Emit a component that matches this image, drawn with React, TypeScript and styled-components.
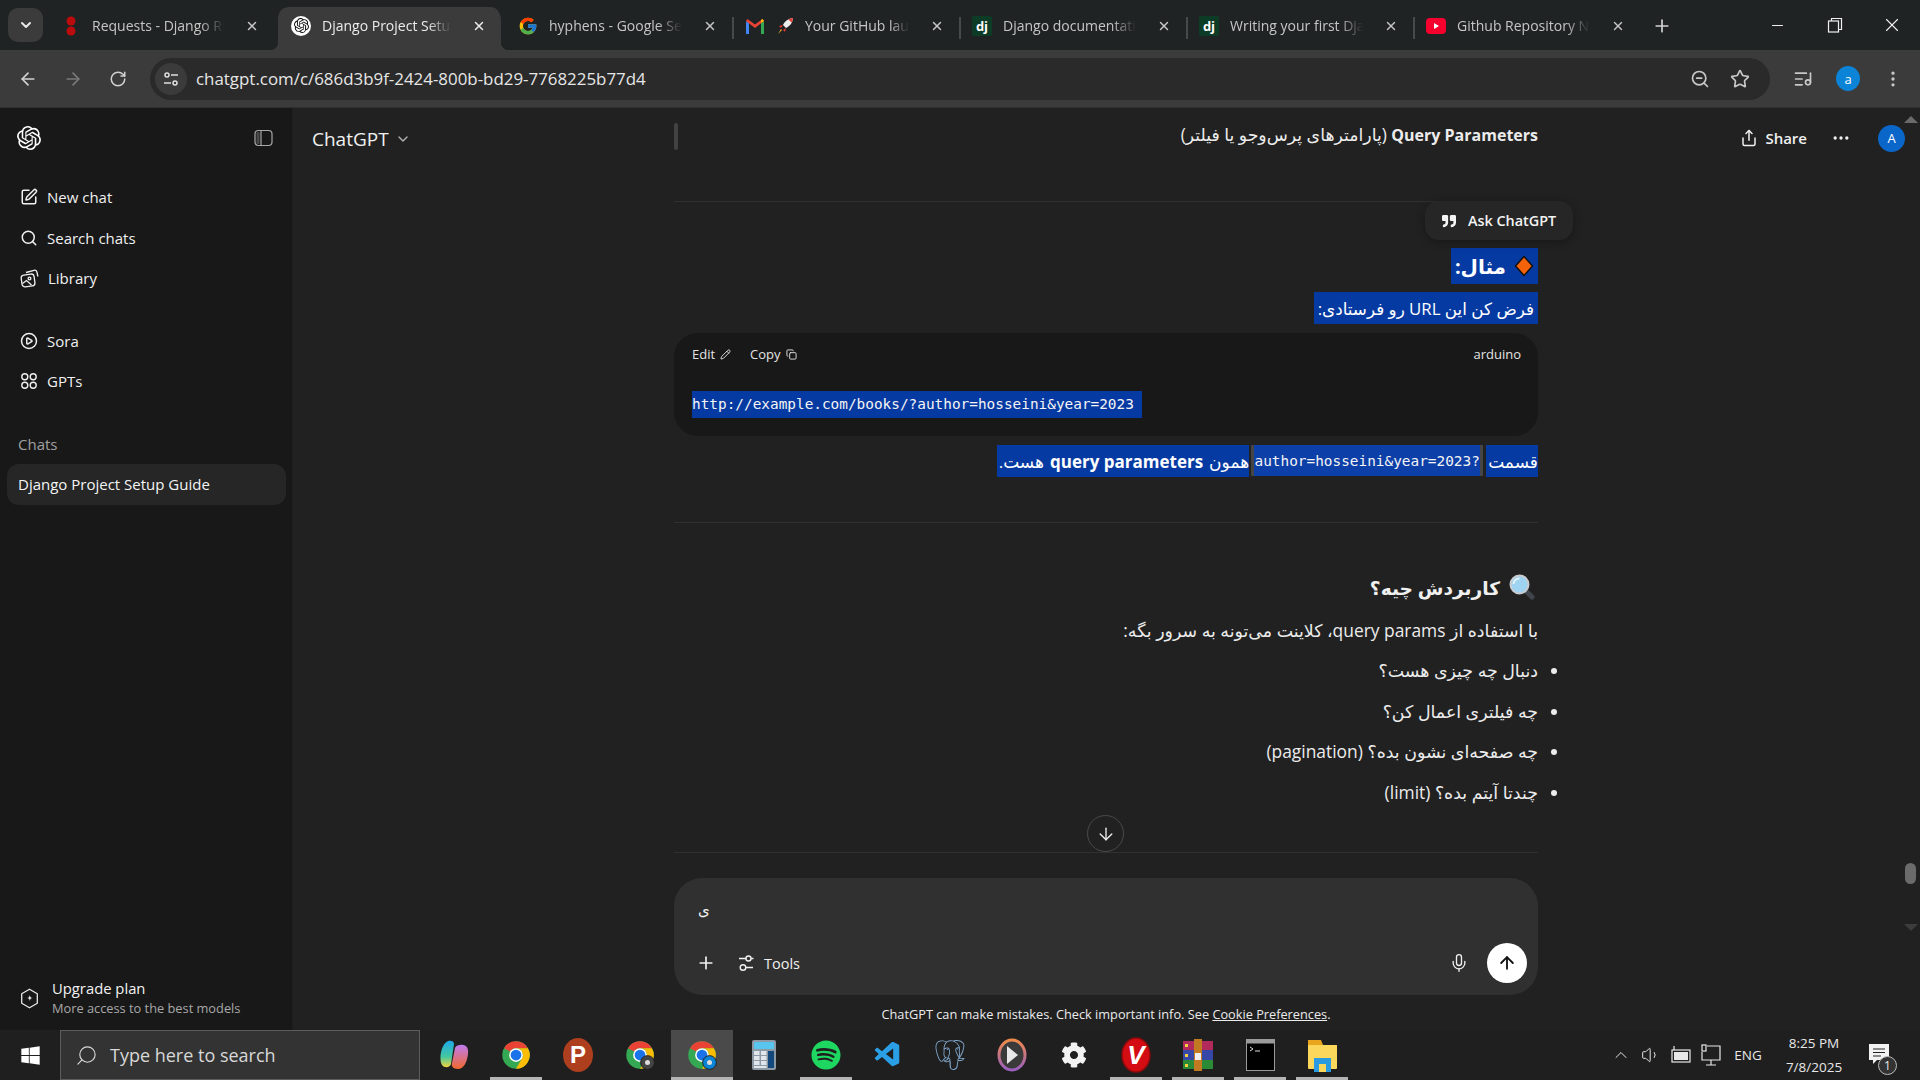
import { ReactElement, ReactNode } from 'react';
import styled, { createGlobalStyle } from 'styled-components';
import {
  ArrowDown,
  ArrowLeft,
  ArrowRight,
  ArrowUp,
  ChevronDown,
  ChevronUp,
  CirclePlay,
  Copy,
  Ellipsis,
  EllipsisVertical,
  ListMusic,
  Mic,
  Minus,
  Pencil,
  Plus,
  RotateCw,
  Search,
  Share,
  SquarePen,
  Star,
  Volume1,
  X,
  ZoomOut,
} from 'lucide-react';
import { FaCog, FaQuoteRight, FaSpotify, FaWindows } from 'react-icons/fa';
import { FcGoogle } from 'react-icons/fc';
import { SiOpenai, SiPostgresql } from 'react-icons/si';
import { VscVscode } from 'react-icons/vsc';

const UI_FONT = '"Open Sans", "DejaVu Sans", sans-serif';
const MONO_FONT = '"DejaVu Sans Mono", "Liberation Mono", monospace';
const SELECTION = '#063aa3';

const GlobalStyle = createGlobalStyle`
  html, body {
    margin: 0;
    padding: 0;
    background: #212121;
  }
  * {
    box-sizing: border-box;
  }
`;

const Page = styled.div`
  width: 1920px;
  height: 1080px;
  display: flex;
  flex-direction: column;
  overflow: hidden;
  font-family: ${UI_FONT};
  color: #ececec;
`;

/* browser chrome */

const TabStrip = styled.div`
  height: 50px;
  flex-shrink: 0;
  display: flex;
  align-items: flex-end;
  padding-left: 8px;
  background: #202323;
`;

const TabSearch = styled.div`
  width: 35px;
  height: 34px;
  margin: 0 5px 8px 0;
  border-radius: 10px;
  background: #3b3b3b;
  color: #e8e8e8;
  display: flex;
  align-items: center;
  justify-content: center;
`;

const Tab = styled.div<{ $active?: boolean; $divider?: boolean; $wide?: boolean }>`
  position: relative;
  width: ${(p) => (p.$wide ? 230 : 227)}px;
  height: 43px;
  padding: 0 ${(p) => (p.$wide ? 19 : 15)}px 6px 13px;
  display: flex;
  align-items: center;
  gap: 11px;
  font-size: 14px;
  color: ${(p) => (p.$active ? '#ececec' : '#c4c7c5')};
  ${(p) =>
    p.$divider &&
    `&::before {
      content: '';
      position: absolute;
      left: 0;
      top: 10px;
      height: 22px;
      width: 2px;
      background: #474a4a;
    }`}
  ${(p) =>
    p.$active &&
    `background: #3b3b3b;
    background-clip: padding-box;
    border-right: 4px solid transparent;
    border-radius: 10px 14px 0 0;
    &::before, &::after {
      content: '';
      position: absolute;
      bottom: 0;
      width: 8px;
      height: 8px;
    }
    &::before {
      left: -8px;
      background: radial-gradient(circle at 0 0, transparent 8px, #3b3b3b 8.5px);
    }
    &::after {
      right: -8px;
      background: radial-gradient(circle at 100% 0, transparent 8px, #3b3b3b 8.5px);
    }`}
`;

const TabIcon = styled.span`
  width: 20px;
  height: 20px;
  flex-shrink: 0;
  display: flex;
  align-items: center;
  justify-content: center;
`;

const FaviconDisc = styled(TabIcon)`
  border-radius: 50%;
  background: #fff;
  color: #111;
`;

const DjangoIcon = styled(TabIcon)`
  background: #0c3c26;
  color: #fff;
  border-radius: 2px;
  font-weight: 700;
  font-size: 13px;
`;

const TabTitle = styled.span`
  flex: 1;
  min-width: 0;
  margin-right: 10px;
  white-space: nowrap;
  overflow: hidden;
  -webkit-mask-image: linear-gradient(90deg, #000 82%, transparent);
  mask-image: linear-gradient(90deg, #000 82%, transparent);
`;

const NewTab = styled.div`
  width: 44px;
  height: 43px;
  padding-bottom: 5px;
  display: flex;
  align-items: center;
  justify-content: center;
  color: #d4d4d4;
`;

const WindowControls = styled.div`
  margin-left: auto;
  align-self: stretch;
  display: flex;
  align-items: center;
  color: #f0f0f0;
`;

const WindowButton = styled.div`
  width: 57px;
  display: flex;
  justify-content: center;
`;

const Toolbar = styled.div`
  height: 58px;
  flex-shrink: 0;
  display: flex;
  align-items: center;
  padding-left: 5px;
  background: #3b3b3b;
  border-bottom: 1px solid #2f2f2f;
`;

const NavButton = styled.div<{ $dim?: boolean }>`
  width: 45px;
  display: flex;
  justify-content: center;
  color: ${(p) => (p.$dim ? '#7a7a7a' : '#d2d2d2')};
`;

const AddressBar = styled.div`
  width: 1620px;
  height: 42px;
  margin-left: 10px;
  padding: 0 20px 0 5px;
  border-radius: 21px;
  background: #2a2a2a;
  display: flex;
  align-items: center;
`;

const SiteInfo = styled.div`
  width: 32px;
  height: 32px;
  border-radius: 50%;
  background: #3b3b3b;
  display: flex;
  align-items: center;
  justify-content: center;
`;

const Url = styled.span`
  margin-left: 9px;
  font-size: 16.9px;
  color: #e6e6e6;
`;

const AddressActions = styled.div`
  margin-left: auto;
  display: flex;
  align-items: center;
  gap: 20px;
  color: #c8c8c8;
`;

const ToolbarEnd = styled.div`
  flex: 1;
  padding: 0 17px 0 23px;
  display: flex;
  align-items: center;
  justify-content: space-between;
  color: #c8c8c8;
`;

const ProfileBadge = styled.div`
  width: 24px;
  height: 25px;
  border-radius: 50%;
  background: #0b84d8;
  color: #fff;
  font-size: 13px;
  display: flex;
  align-items: center;
  justify-content: center;
`;

/* app body */

const Body = styled.div`
  flex: 1;
  min-height: 0;
  display: flex;
`;

const Sidebar = styled.aside`
  width: 293px;
  flex-shrink: 0;
  display: flex;
  flex-direction: column;
  background: #181818;
  border-right: 1px solid #1e1e1e;
`;

const SidebarHead = styled.div`
  height: 60px;
  padding: 0 19px 0 17px;
  margin-bottom: 9px;
  display: flex;
  align-items: center;
  justify-content: space-between;
  color: #fff;
`;

const NavList = styled.div<{ $gapTop?: number }>`
  margin-top: ${(p) => p.$gapTop ?? 0}px;
`;

const NavRow = styled.div`
  height: 40.5px;
  padding-left: 20px;
  display: flex;
  align-items: center;
  gap: 9px;
  font-size: 15px;
  color: #f0f0f0;
`;

const SectionLabel = styled.div`
  margin: 30px 0 8px 18px;
  height: 24px;
  line-height: 24px;
  font-size: 15px;
  color: #a0a0a0;
`;

const ChatRow = styled.div`
  width: 279px;
  height: 41px;
  margin-left: 7px;
  padding-left: 11px;
  border-radius: 12px;
  background: #262626;
  display: flex;
  align-items: center;
  font-size: 15px;
  color: #f4f4f4;
`;

const UpgradeRow = styled.div`
  margin-top: auto;
  height: 50px;
  margin-bottom: 7px;
  padding-left: 20px;
  display: flex;
  align-items: center;
  gap: 13px;
`;

const UpgradeText = styled.div`
  display: flex;
  flex-direction: column;
`;

const UpgradeTitle = styled.span`
  font-size: 14.8px;
  line-height: 20px;
  color: #f2f2f2;
`;

const UpgradeSub = styled.span`
  font-size: 12.8px;
  line-height: 20px;
  color: #a8a8a8;
`;

const Main = styled.main`
  position: relative;
  flex: 1;
  min-width: 0;
  display: flex;
  flex-direction: column;
  background: #212121;
`;

const TopBar = styled.header`
  height: 60px;
  flex-shrink: 0;
  display: grid;
  grid-template-columns: 381px 864px 1fr;
  align-items: center;
`;

const ModelPicker = styled.div`
  padding: 2px 0 0 19px;
  display: flex;
  align-items: center;
  gap: 6px;
  font-size: 19px;
  color: #f0f0f0;
`;

const ThreadTitle = styled.div`
  position: relative;
  direction: rtl;
  margin-top: -7px;
  font-size: 17.3px;
  color: #ececec;
  white-space: nowrap;
  text-align: right;
`;

const TitleLatin = styled.span`
  font-size: 16px;
  font-weight: 700;
`;

const StickyMark = styled.span`
  position: absolute;
  left: 0;
  top: 0;
  width: 4px;
  height: 27px;
  border-radius: 2px;
  background: #424242;
`;

const TopActions = styled.div`
  padding-right: 15px;
  display: flex;
  align-items: center;
  justify-content: flex-end;
  color: #f0f0f0;
`;

const ShareButton = styled.div`
  display: flex;
  align-items: center;
  gap: 7px;
  font-size: 15px;
  font-weight: 600;
`;

const MoreButton = styled.div`
  margin: 0 27px 0 24px;
  display: flex;
`;

const Avatar = styled.div`
  width: 27px;
  height: 27px;
  border-radius: 50%;
  background: #0a66c9;
  color: #fff;
  font-size: 13px;
  display: flex;
  align-items: center;
  justify-content: center;
`;

const Thread = styled.section`
  position: relative;
  width: 864px;
  margin-left: 381px;
  flex: 1;
  min-height: 0;
  direction: rtl;
  display: flex;
  flex-direction: column;
  align-items: flex-start;
`;

const Rule = styled.hr<{ $top: number }>`
  width: 100%;
  margin: ${(p) => p.$top}px 0 0;
  border: 0;
  border-top: 1px solid #303030;
`;

const AskPopup = styled.div`
  position: absolute;
  right: -35px;
  top: 33px;
  width: 148px;
  height: 39px;
  padding-left: 17px;
  display: flex;
  direction: ltr;
  align-items: center;
  gap: 12px;
  border-radius: 14px;
  background: #262626;
  box-shadow: 0 2px 10px rgba(0, 0, 0, 0.3);
  font-size: 14.4px;
  font-weight: 600;
  white-space: nowrap;
  color: #f4f4f4;
`;

const Selected = styled.div<{ $top: number; $height: number }>`
  margin-top: ${(p) => p.$top}px;
  height: ${(p) => p.$height}px;
  padding: 0 4px 0 4px;
  background: ${SELECTION};
  color: #fff;
  display: flex;
  align-items: center;
  gap: 8px;
`;

const SelectedHeading = styled(Selected)`
  font-size: 20px;
  font-weight: 700;
`;

const SelectedText = styled(Selected)`
  font-size: 16.8px;
  white-space: nowrap;
`;

const MixedLine = styled.div`
  margin-top: 9px;
  height: 32px;
  display: flex;
  gap: 5px;
  font-size: 17px;
`;

const SelectionPiece = styled.span`
  height: 32px;
  display: flex;
  align-items: center;
  gap: 6px;
  padding: 0 0 0 2px;
  background: ${SELECTION};
  color: #fff;
  white-space: nowrap;
`;

const StrongWord = styled.strong`
  font-weight: 700;
`;

const InlineCode = styled.code`
  position: relative;
  height: 31px;
  width: 226px;
  margin-right: 1px;
  text-align: center;
  line-height: 33px;
  font-family: ${MONO_FONT};
  font-size: 14.4px;
  background: #0c3fa8;
  color: #f4f4f4;
  white-space: nowrap;
  box-shadow: 3px 0 0 #454545, -3px 0 0 #454545;
`;

const CodeBlock = styled.div`
  width: 100%;
  height: 103px;
  margin-top: 9px;
  direction: ltr;
  border-radius: 24px;
  background: #181818;
`;

const CodeHead = styled.div`
  height: 42px;
  padding: 0 17px 0 18px;
  display: flex;
  align-items: center;
  font-size: 13px;
  color: #e4e4e4;
`;

const CodeAction = styled.span`
  margin-right: 19px;
  display: flex;
  align-items: center;
  gap: 5px;
`;

const CodeLang = styled.span`
  margin-left: auto;
`;

const CodeBody = styled.pre`
  width: max-content;
  height: 27px;
  margin: 16px 0 0 18px;
  padding-right: 8px;
  background: ${SELECTION};
  font-family: ${MONO_FONT};
  font-size: 14.4px;
  line-height: 27px;
  color: #f4f4f4;
`;

const Heading = styled.h3`
  height: 36px;
  margin: 46px 0 0;
  padding-right: 3px;
  display: flex;
  align-items: center;
  gap: 9px;
  font-size: 18.6px;
  font-weight: 700;
  color: #f0f0f0;
`;

const Para = styled.p`
  height: 32px;
  margin: 9px 0 0;
  line-height: 32px;
  font-size: 17.4px;
  color: #ececec;
`;

const Bullets = styled.ul`
  margin: 8px 0 0;
  padding: 0;
  display: flex;
  flex-direction: column;
  gap: 8.5px;
  font-size: 17.4px;
  color: #ececec;
`;

const Bullet = styled.li`
  height: 32px;
  line-height: 32px;
  margin-right: 0;
`;

const ScrollDown = styled.div`
  position: absolute;
  left: 413px;
  bottom: 1px;
  width: 37px;
  height: 37px;
  border-radius: 50%;
  border: 1px solid #4a4a4a;
  background: #212121;
  display: flex;
  align-items: center;
  justify-content: center;
  color: #f0f0f0;
`;

const Composer = styled.div`
  width: 864px;
  height: 117px;
  margin: 25px 0 0 381px;
  flex-shrink: 0;
  padding: 20px 11px 12px 22px;
  border-radius: 28px;
  background: #303030;
  display: flex;
  flex-direction: column;
  gap: 15px;
`;

const Draft = styled.div`
  height: 30px;
  padding-left: 2px;
  line-height: 22px;
  font-size: 15px;
  color: #f0f0f0;
`;

const ComposerRow = styled.div`
  height: 40px;
  display: flex;
  align-items: center;
  color: #f0f0f0;
`;

const ToolsButton = styled.div`
  margin-left: 20px;
  display: flex;
  align-items: center;
  gap: 8px;
  font-size: 14.5px;
`;

const MicButton = styled.div`
  margin: 0 18px 0 auto;
  display: flex;
`;

const SendButton = styled.div`
  width: 40px;
  height: 40px;
  border-radius: 50%;
  background: #fff;
  color: #111;
  display: flex;
  align-items: center;
  justify-content: center;
`;

const Footnote = styled.div`
  width: 864px;
  height: 30px;
  margin: 4px 0 1px 381px;
  flex-shrink: 0;
  line-height: 30px;
  text-align: center;
  font-size: 12.75px;
  color: #ececec;
`;

const FootLink = styled.span`
  text-decoration: underline;
`;

const ScrollThumb = styled.div`
  position: absolute;
  right: 4px;
  top: 755px;
  width: 11px;
  height: 21px;
  border-radius: 6px;
  background: #6b6b6b;
`;

const ScrollArrow = styled.div<{ $down?: boolean; $top: number }>`
  position: absolute;
  right: 2px;
  top: ${(p) => p.$top}px;
  width: 0;
  height: 0;
  border-left: 7px solid transparent;
  border-right: 7px solid transparent;
  ${(p) =>
    p.$down
      ? 'border-top: 7px solid #3c3c3c;'
      : 'border-bottom: 7px solid #6a6a6a;'}
`;

/* windows taskbar */

const Taskbar = styled.footer`
  height: 50px;
  flex-shrink: 0;
  display: flex;
  align-items: center;
  background: #1f1f1f;
  color: #e8e8e8;
`;

const StartButton = styled.div`
  width: 60px;
  display: flex;
  justify-content: center;
  color: #fff;
`;

const SearchBox = styled.div`
  width: 360px;
  height: 50px;
  margin-right: 3px;
  padding-left: 14px;
  display: flex;
  align-items: center;
  gap: 12px;
  background: #333;
  border: 1px solid #5c5c5c;
  font-size: 18px;
  color: #d8d8d8;
`;

const TaskIcon = styled.div<{ $running?: boolean; $active?: boolean }>`
  position: relative;
  width: 62px;
  height: 50px;
  display: flex;
  align-items: center;
  justify-content: center;
  background: ${(p) => (p.$active ? '#4a4a4a' : 'transparent')};
  ${(p) =>
    p.$running &&
    `&::after {
      content: '';
      position: absolute;
      bottom: 0;
      left: ${p.$active ? 0 : 5}px;
      right: ${p.$active ? 0 : 5}px;
      height: 3px;
      background: #b4b4b4;
    }`}
`;

const Tray = styled.div`
  margin-left: auto;
  height: 100%;
  padding-right: 21px;
  display: flex;
  align-items: center;
`;

const TrayIcon = styled.div`
  width: 30px;
  display: flex;
  justify-content: center;
`;

const TrayLang = styled.span`
  margin-left: 2px;
  width: 40px;
  font-size: 13.5px;
  text-align: center;
`;

const Clock = styled.div`
  width: 88px;
  margin-left: 2px;
  text-align: center;
  font-size: 13.5px;
  line-height: 24px;
`;

const Notice = styled.div`
  position: relative;
  width: 40px;
  margin-left: 1px;
  display: flex;
  justify-content: center;
`;

const NoticeCount = styled.span`
  position: absolute;
  right: 2px;
  bottom: -9px;
  width: 19px;
  height: 19px;
  border-radius: 50%;
  border: 1px solid #bbb;
  background: #333;
  font-size: 12px;
  line-height: 17px;
  text-align: center;
`;

/* drawn icons */

const ChromeLogo = ({ size = 30, badge }: { size?: number; badge?: ReactNode }): ReactElement => (
  <svg width={size} height={size} viewBox="0 0 24 24">
    <circle cx="12" cy="12" r="11" fill="#34a853" />
    <path d="M12 1a11 11 0 0 1 9.53 5.5H12a5.5 5.5 0 0 0-4.76 2.75L2.47 6.5A11 11 0 0 1 12 1z" fill="#ea4335" />
    <path d="M21.53 6.5A11 11 0 0 1 12 23l4.76-8.25A5.5 5.5 0 0 0 12 6.5z" fill="#fbbc04" />
    <circle cx="12" cy="12" r="5.5" fill="#fff" />
    <circle cx="12" cy="12" r="4.3" fill="#1a73e8" />
    {badge}
  </svg>
);

const GmailLogo = (): ReactElement => (
  <svg width="20" height="16" viewBox="0 0 20 16">
    <path d="M1 16V3l3 2v11z" fill="#4285f4" />
    <path d="M16 16V5l3-2v13z" fill="#34a853" />
    <path d="M1 3l9 7 9-7-1.5-2L10 6.5 2.5 1z" fill="#ea4335" />
    <path d="M16 5l3-2-1.5-2L16 2z" fill="#fbbc04" />
  </svg>
);

const RocketLogo = (): ReactElement => (
  <svg width="18" height="18" viewBox="0 0 18 18">
    <path d="M17 1c-5 .5-8 3-10 7l3 3c4-2 6.500-5 7-10z" fill="#eee" />
    <path d="M17 1c-1.800.2-3.300.7-4.600 1.500l3.100 3.100C16.300 4.300 16.800 2.800 17 1z" fill="#e53935" />
    <path d="M7 8l-4 1 2 2zM10 11l-1 4-2-2z" fill="#e53935" />
    <path d="M5 12l1 1-4 4z" fill="#f9a825" />
  </svg>
);

const YoutubeLogo = (): ReactElement => (
  <svg width="20" height="20" viewBox="0 0 20 20">
    <rect x="0" y="2" width="20" height="16" rx="4" fill="#f6002e" />
    <path d="M8 7l5 3-5 3z" fill="#fff" />
  </svg>
);

const RestoreGlyph = (): ReactElement => (
  <svg width="16" height="16" viewBox="0 0 16 16" fill="none" stroke="#f0f0f0" strokeWidth="1.200">
    <rect x="1.500" y="4" width="10" height="11" />
    <path d="M4.500 4V1.500h10v11H11.500" />
  </svg>
);

const SiteInfoGlyph = (): ReactElement => (
  <svg width="16" height="16" viewBox="0 0 16 16" fill="none" stroke="#e0e0e0" strokeWidth="1.5">
    <circle cx="4" cy="4" r="2" />
    <path d="M8 4h7M1 12h7" />
    <circle cx="12" cy="12" r="2" />
  </svg>
);

const PanelGlyph = (): ReactElement => (
  <svg width="19" height="18" viewBox="0 0 19 18" fill="none" stroke="#a8a8a8" strokeWidth="1.2">
    <rect x="1" y="1.500" width="17" height="15" rx="3.500" />
    <path d="M7 1.500v15" />
    <rect x="2.500" y="3" width="3" height="12" rx="1.200" fill="#4a4a4a" stroke="none" />
  </svg>
);

const LibraryGlyph = (): ReactElement => (
  <svg width="19" height="19" viewBox="0 0 19 19" fill="none" stroke="#f0f0f0" strokeWidth="1.3">
    <path d="M6 3.500l8-2.200c1.300-.3 2.500.4 2.900 1.700l1 4.500" />
    <rect x="1.500" y="5.500" width="13" height="12" rx="3" transform="rotate(-8 8 11)" />
    <circle cx="9.500" cy="9.500" r="1.400" />
    <path d="M2.500 14.500l4-3 5 4.500" />
  </svg>
);

const GptsGlyph = (): ReactElement => (
  <svg width="18" height="18" viewBox="0 0 18 18" fill="none" stroke="#f0f0f0" strokeWidth="1.4">
    <circle cx="4.800" cy="4.800" r="3" />
    <circle cx="13.200" cy="4.800" r="3" />
    <circle cx="4.800" cy="13.200" r="3" />
    <circle cx="13.200" cy="13.200" r="3" />
  </svg>
);

const UpgradeGlyph = (): ReactElement => (
  <svg width="19" height="21" viewBox="0 0 19 21" fill="none" stroke="#e8e8e8" strokeWidth="1.300">
    <path d="M9.500 1.200l7.800 4.500v9.600l-7.800 4.500-7.800-4.500V5.700z" strokeLinejoin="round" />
    <path d="M9.800 7c.3 2 1 2.800 2.800 3-1.800.3-2.500 1-2.800 3-.3-2-1-2.700-2.800-3 1.800-.2 2.500-1 2.800-3z" fill="#e8e8e8" stroke="none" />
  </svg>
);

const ToolsGlyph = (): ReactElement => (
  <svg width="20" height="20" viewBox="0 0 20 20" fill="none" stroke="#f0f0f0" strokeWidth="1.400">
    <circle cx="12.500" cy="5.500" r="2.500" />
    <circle cx="7" cy="14.500" r="2.800" />
    <path d="M3 5.500h7M15 5.500h2.500M10 14.500h7" />
  </svg>
);

const DiamondGlyph = (): ReactElement => (
  <svg width="20" height="22" viewBox="0 0 20 22">
    <path d="M10 1.500L18.500 11 10 20.500 1.500 11z" fill="#f4630a" stroke="#111" strokeWidth="1.500" strokeLinejoin="round" />
  </svg>
);

const LensGlyph = (): ReactElement => (
  <svg width="26" height="26" viewBox="0 0 26 26">
    <path d="M15 15l8 8" stroke="#3f454a" strokeWidth="5" strokeLinecap="round" />
    <circle cx="10.500" cy="10.500" r="9" fill="#9fd3f2" stroke="#c9ccd0" strokeWidth="2" />
    <path d="M4.500 10a6 6 0 0 1 6-5.500" stroke="#e4f3fc" strokeWidth="2" fill="none" />
  </svg>
);

const CopilotLogo = (): ReactElement => (
  <svg width="30" height="32" viewBox="0 0 30 32">
    <defs>
      <linearGradient id="copilotA" x1="0" y1="0" x2="0" y2="1">
        <stop offset="0" stopColor="#1ea7e8" />
        <stop offset="0.6" stopColor="#43c8a0" />
        <stop offset="1" stopColor="#f5d33d" />
      </linearGradient>
      <linearGradient id="copilotB" x1="0" y1="0" x2="0" y2="1">
        <stop offset="0" stopColor="#c07bf0" />
        <stop offset="1" stopColor="#f0682c" />
      </linearGradient>
    </defs>
    <path d="M9 2c3-1 6 0 6 3l-3 20c-.5 3-6 5-9 1-3-4-2-20 6-24z" fill="url(#copilotA)" />
    <path d="M21 6c6-1 9 3 8 9-1 8-4 15-10 15-5 0-7-3-6-6l3-15c.5-2 3-3 5-3z" fill="url(#copilotB)" />
  </svg>
);

const PsiphonLogo = (): ReactElement => (
  <svg width="30" height="34" viewBox="0 0 30 34">
    <ellipse cx="15" cy="17" rx="15" ry="17" fill="#ad3e1e" />
    <text x="15" y="25" textAnchor="middle" fontFamily="Liberation Sans" fontWeight="700" fontSize="24" fill="#fff">
      P
    </text>
  </svg>
);

const CalculatorLogo = (): ReactElement => (
  <svg width="24" height="30" viewBox="0 0 24 30">
    <rect width="24" height="30" rx="2" fill="#8d9aa5" />
    <rect x="2" y="2" width="20" height="7" fill="#58c5ee" />
    {[11, 16, 21].map((y) => (
      <g key={y}>
        <rect x="2" y={y} width="5.500" height="4" fill="#dfe5ea" />
        <rect x="9" y={y} width="5.500" height="4" fill="#dfe5ea" />
      </g>
    ))}
    <rect x="16" y="11" width="6" height="17" fill="#12487c" />
    <rect x="2" y="26" width="12.500" height="2" fill="#dfe5ea" />
  </svg>
);

const MediaLogo = (): ReactElement => (
  <svg width="30" height="34" viewBox="0 0 30 34">
    <defs>
      <linearGradient id="mediaRing" x1="0" y1="0" x2="0" y2="1">
        <stop offset="0" stopColor="#f08a4b" />
        <stop offset="1" stopColor="#9a5fc0" />
      </linearGradient>
    </defs>
    <ellipse cx="15" cy="17" rx="13" ry="15" fill="#3a3a3a" stroke="url(#mediaRing)" strokeWidth="3" />
    <path d="M10 8l11 9-11 9z" fill="#e8e8e8" />
  </svg>
);

const VivaldiLogo = (): ReactElement => (
  <svg width="30" height="36" viewBox="0 0 30 36">
    <ellipse cx="15" cy="18" rx="14" ry="17" fill="#d40d12" stroke="#8e0a0c" strokeWidth="1.500" />
    <text x="15" y="27" textAnchor="middle" fontFamily="Liberation Sans" fontStyle="italic" fontWeight="700" fontSize="26" fill="#fff">
      V
    </text>
  </svg>
);

const WinrarLogo = (): ReactElement => (
  <svg width="30" height="32" viewBox="0 0 30 32">
    <rect y="2" width="30" height="9" fill="#b22a5c" />
    <rect y="11" width="30" height="10" fill="#3747a8" />
    <rect y="21" width="30" height="9" fill="#2b8a36" />
    <rect x="11" y="0" width="8" height="32" fill="#c27a22" />
    <rect x="12" y="14" width="6" height="7" fill="#eee" />
    <rect x="2" y="5" width="3" height="3" fill="#f4d03f" />
    <rect x="2" y="15" width="3" height="3" fill="#f4d03f" />
    <rect x="2" y="25" width="3" height="3" fill="#f4d03f" />
  </svg>
);

const TerminalLogo = (): ReactElement => (
  <svg width="29" height="32" viewBox="0 0 29 32">
    <rect x="0.500" y="0.500" width="28" height="31" fill="#000" stroke="#9a9a9a" />
    <rect x="0.500" y="0.500" width="28" height="4" fill="#9a9a9a" />
    <path d="M4 8l3 2-3 2M9 12h5" stroke="#ddd" strokeWidth="1" fill="none" />
  </svg>
);

const FolderLogo = (): ReactElement => (
  <svg width="29" height="34" viewBox="0 0 29 34">
    <path d="M0 2h13l2 5h14v5H0z" fill="#e8a51d" />
    <rect y="7" width="29" height="24" rx="1" fill="#fbd75b" />
    <rect x="6" y="20" width="17" height="14" fill="#2a9be0" />
    <rect x="11" y="26" width="7" height="8" fill="#fbd75b" />
  </svg>
);

const BatteryGlyph = (): ReactElement => (
  <svg width="20" height="20" viewBox="0 0 20 20" fill="none" stroke="#e8e8e8" strokeWidth="1.200">
    <rect x="1" y="5" width="18" height="12" />
    <rect x="3" y="7" width="14" height="8" fill="#e8e8e8" stroke="none" />
    <path d="M3 1v4" />
  </svg>
);

const NetworkGlyph = (): ReactElement => (
  <svg width="20" height="24" viewBox="0 0 20 24" fill="none" stroke="#e8e8e8" strokeWidth="1.200">
    <path d="M6 3h13v14H1V9" />
    <rect x="1" y="2" width="4" height="6" />
    <path d="M10 17v5M5 22h10" />
  </svg>
);

const NoticeGlyph = (): ReactElement => (
  <svg width="20" height="22" viewBox="0 0 20 22">
    <path d="M0 0h20v16H8l-4 4v-4H0z" fill="#f2f2f2" />
    <path d="M4 5h12M4 8.500h12M4 12h8" stroke="#222" strokeWidth="1" />
  </svg>
);

const TwoDots = (): ReactElement => (
  <svg width="10" height="20" viewBox="0 0 10 20">
    <circle cx="5" cy="5" r="4.500" fill="#ba0c0c" />
    <circle cx="5" cy="15" r="4.500" fill="#ba0c0c" />
  </svg>
);

const tabs: { title: string; icon: ReactNode; extra?: ReactNode; active?: boolean; divider?: boolean; wide?: boolean }[] = [
  { title: 'Requests - Django REST', icon: <TabIcon><TwoDots /></TabIcon>, wide: true },
  {
    title: 'Django Project Setup Guide',
    icon: <FaviconDisc><SiOpenai size={15} /></FaviconDisc>,
    active: true,
  },
  { title: 'hyphens - Google Search', icon: <TabIcon><FcGoogle size={20} /></TabIcon> },
  {
    title: 'Your GitHub launch',
    icon: <TabIcon><GmailLogo /></TabIcon>,
    extra: <RocketLogo />,
    divider: true,
  },
  { title: 'Django documentation', icon: <DjangoIcon>dj</DjangoIcon>, divider: true },
  { title: 'Writing your first Django', icon: <DjangoIcon>dj</DjangoIcon>, divider: true },
  { title: 'Github Repository Name', icon: <TabIcon><YoutubeLogo /></TabIcon>, divider: true },
];

const userBadge = (fill: string): ReactNode => (
  <>
    <circle cx="18" cy="18" r="5.500" fill={fill} stroke="#222" strokeWidth="0.800" />
    <circle cx="18" cy="18" r="2" fill="#ddd" />
  </>
);

const taskIcons: { icon: ReactNode; running?: boolean; active?: boolean }[] = [
  { icon: <CopilotLogo /> },
  { icon: <ChromeLogo />, running: true },
  { icon: <PsiphonLogo /> },
  { icon: <ChromeLogo badge={userBadge('#444')} /> },
  { icon: <ChromeLogo badge={userBadge('#0b84d8')} />, running: true, active: true },
  { icon: <CalculatorLogo /> },
  { icon: <FaSpotify size={30} color="#1ed760" />, running: true },
  { icon: <VscVscode size={30} color="#2a9fe6" /> },
  { icon: <SiPostgresql size={30} color="#7fa5c9" /> },
  { icon: <MediaLogo /> },
  { icon: <FaCog size={26} color="#f2f2f2" /> },
  { icon: <VivaldiLogo />, running: true },
  { icon: <WinrarLogo />, running: true },
  { icon: <TerminalLogo />, running: true },
  { icon: <FolderLogo />, running: true },
];

const bullets = [
  'دنبال چه چیزی هست؟',
  'چه فیلتری اعمال کن؟',
  'چه صفحه‌ای نشون بده؟ (pagination)',
  'چندتا آیتم بده؟ (limit)',
];

const App = (): ReactElement => {
  return (
    <Page>
      <GlobalStyle />

      <TabStrip>
        <TabSearch>
          <ChevronDown size={16} strokeWidth={3} />
        </TabSearch>
        {tabs.map((tab) => (
          <Tab key={tab.title} $active={tab.active} $divider={tab.divider} $wide={tab.wide}>
            {tab.icon}
            {tab.extra}
            <TabTitle>{tab.title}</TabTitle>
            <X size={14} strokeWidth={2.5} />
          </Tab>
        ))}
        <NewTab>
          <Plus size={20} />
        </NewTab>
        <WindowControls>
          <WindowButton>
            <Minus size={17} strokeWidth={1.5} />
          </WindowButton>
          <WindowButton>
            <RestoreGlyph />
          </WindowButton>
          <WindowButton>
            <X size={22} strokeWidth={1.2} />
          </WindowButton>
        </WindowControls>
      </TabStrip>

      <Toolbar>
        <NavButton>
          <ArrowLeft size={20} />
        </NavButton>
        <NavButton $dim>
          <ArrowRight size={20} />
        </NavButton>
        <NavButton>
          <RotateCw size={18} />
        </NavButton>
        <AddressBar>
          <SiteInfo>
            <SiteInfoGlyph />
          </SiteInfo>
          <Url>chatgpt.com/c/686d3b9f-2424-800b-bd29-7768225b77d4</Url>
          <AddressActions>
            <ZoomOut size={20} />
            <Star size={20} />
          </AddressActions>
        </AddressBar>
        <ToolbarEnd>
          <ListMusic size={20} />
          <ProfileBadge>a</ProfileBadge>
          <EllipsisVertical size={20} />
        </ToolbarEnd>
      </Toolbar>

      <Body>
        <Sidebar>
          <SidebarHead>
            <SiOpenai size={24} />
            <PanelGlyph />
          </SidebarHead>
          <NavList>
            <NavRow>
              <SquarePen size={18} />
              New chat
            </NavRow>
            <NavRow>
              <Search size={18} />
              Search chats
            </NavRow>
            <NavRow>
              <LibraryGlyph />
              Library
            </NavRow>
          </NavList>
          <NavList $gapTop={22}>
            <NavRow>
              <CirclePlay size={18} />
              Sora
            </NavRow>
            <NavRow>
              <GptsGlyph />
              GPTs
            </NavRow>
          </NavList>
          <SectionLabel>Chats</SectionLabel>
          <ChatRow>Django Project Setup Guide</ChatRow>
          <UpgradeRow>
            <UpgradeGlyph />
            <UpgradeText>
              <UpgradeTitle>Upgrade plan</UpgradeTitle>
              <UpgradeSub>More access to the best models</UpgradeSub>
            </UpgradeText>
          </UpgradeRow>
        </Sidebar>

        <Main>
          <TopBar>
            <ModelPicker>
              ChatGPT
              <ChevronDown size={16} color="#b4b4b4" />
            </ModelPicker>
            <ThreadTitle>
              <StickyMark />
              <TitleLatin>Query Parameters</TitleLatin> (پارامترهای پرس‌وجو یا فیلتر)
            </ThreadTitle>
            <TopActions>
              <ShareButton>
                <Share size={18} />
                Share
              </ShareButton>
              <MoreButton>
                <Ellipsis size={20} />
              </MoreButton>
              <Avatar>A</Avatar>
            </TopActions>
          </TopBar>

          <Thread>
            <Rule $top={33} />
            <AskPopup>
              <FaQuoteRight size={14} />
              Ask ChatGPT
            </AskPopup>
            <SelectedHeading $top={46} $height={36}>
              <DiamondGlyph />
              مثال:
            </SelectedHeading>
            <SelectedText $top={8} $height={32}>
              فرض کن این URL رو فرستادی:
            </SelectedText>
            <CodeBlock>
              <CodeHead>
                <CodeAction>
                  Edit <Pencil size={11} />
                </CodeAction>
                <CodeAction>
                  Copy <Copy size={11} />
                </CodeAction>
                <CodeLang>arduino</CodeLang>
              </CodeHead>
              <CodeBody>http://example.com/books/?author=hosseini&amp;year=2023</CodeBody>
            </CodeBlock>
            <MixedLine>
              <SelectionPiece>قسمت</SelectionPiece>
              <InlineCode>?author=hosseini&amp;year=2023</InlineCode>
              <SelectionPiece>
                همون <StrongWord>query parameters</StrongWord> هست.
              </SelectionPiece>
            </MixedLine>
            <Rule $top={45} />
            <Heading>
              <LensGlyph />
              کاربردش چیه؟
            </Heading>
            <Para>با استفاده از query params، کلاینت می‌تونه به سرور بگه:</Para>
            <Bullets>
              {bullets.map((item) => (
                <Bullet key={item}>{item}</Bullet>
              ))}
            </Bullets>
            <Rule $top={44} />
            <ScrollDown>
              <ArrowDown size={20} strokeWidth={1.6} />
            </ScrollDown>
          </Thread>

          <Composer>
            <Draft>ی</Draft>
            <ComposerRow>
              <Plus size={20} />
              <ToolsButton>
                <ToolsGlyph />
                Tools
              </ToolsButton>
              <MicButton>
                <Mic size={20} strokeWidth={1.6} />
              </MicButton>
              <SendButton>
                <ArrowUp size={20} strokeWidth={2.2} />
              </SendButton>
            </ComposerRow>
          </Composer>
          <Footnote>
            ChatGPT can make mistakes. Check important info. See <FootLink>Cookie Preferences</FootLink>.
          </Footnote>

          <ScrollArrow $top={8} />
          <ScrollThumb />
          <ScrollArrow $top={816} $down />
        </Main>
      </Body>

      <Taskbar>
        <StartButton>
          <FaWindows size={21} />
        </StartButton>
        <SearchBox>
          <Search size={23} strokeWidth={1.2} style={{ transform: 'scaleX(-1)' }} />
          Type here to search
        </SearchBox>
        {taskIcons.map((item, index) => (
          <TaskIcon key={index} $running={item.running} $active={item.active}>
            {item.icon}
          </TaskIcon>
        ))}
        <Tray>
          <TrayIcon>
            <ChevronUp size={20} strokeWidth={1.2} />
          </TrayIcon>
          <TrayIcon>
            <Volume1 size={20} strokeWidth={1.2} />
          </TrayIcon>
          <TrayIcon>
            <BatteryGlyph />
          </TrayIcon>
          <TrayIcon>
            <NetworkGlyph />
          </TrayIcon>
          <TrayLang>ENG</TrayLang>
          <Clock>
            8:25 PM
            <br />
            7/8/2025
          </Clock>
          <Notice>
            <NoticeGlyph />
            <NoticeCount>1</NoticeCount>
          </Notice>
        </Tray>
      </Taskbar>
    </Page>
  );
};

export default App;
